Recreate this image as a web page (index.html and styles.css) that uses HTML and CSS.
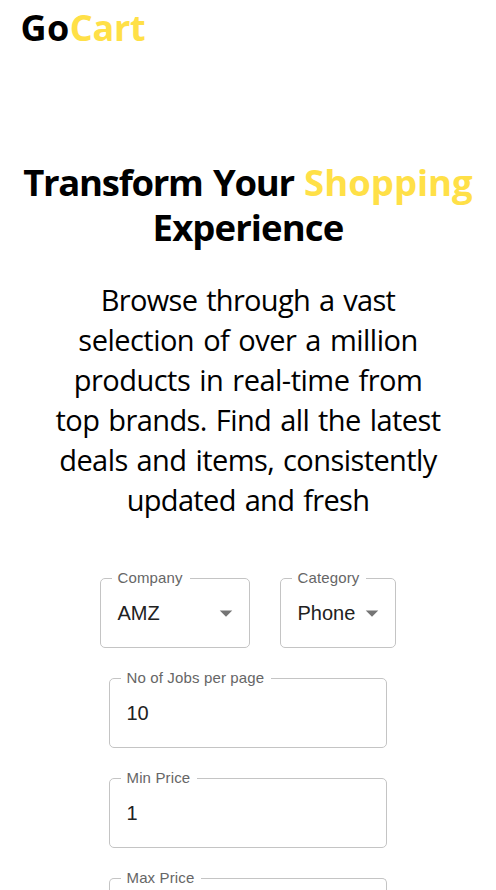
FILE: index.html
```html
<!DOCTYPE html>
<html lang="en">
<head>
<meta charset="utf-8">
<title>GoCart</title>
<link rel="stylesheet" href="styles.css">
</head>
<body>
<header class="logo"><span class="go">Go</span><span class="cart accent">Cart</span></header>
<main>
<h1><span class="line"><span class="lead">Transform Your </span><span class="accent">Shopping</span></span><span class="line second">Experience</span></h1>
<p class="intro"><span class="l1">Browse through a vast</span><span class="l2">selection of over a million</span><span class="l3">products in real-time from</span><span class="l4">top brands. Find all the latest</span><span class="l5">deals and items, consistently</span><span class="l6">updated and fresh</span></p>
<form class="filters">
<div class="row">
<fieldset class="field company"><legend>Company</legend><div class="value">AMZ<svg class="arrow" viewBox="0 0 24 24"><path d="M7 10l5 5 5-5z"/></svg></div></fieldset>
<fieldset class="field category"><legend>Category</legend><div class="value">Phone<svg class="arrow" viewBox="0 0 24 24"><path d="M7 10l5 5 5-5z"/></svg></div></fieldset>
</div>
<fieldset class="field wide"><legend>No of Jobs per page</legend><div class="value">10</div></fieldset>
<fieldset class="field wide"><legend>Min Price</legend><div class="value">1</div></fieldset>
<fieldset class="field wide last"><legend>Max Price</legend></fieldset>
</form>
</main>
</body>
</html>
```
FILE: styles.css
```css
* { box-sizing: border-box; }
html, body { margin: 0; height: 890px; overflow: hidden; }
body { background: #fff; color: #000; font-family: "Open Sans", "Noto Sans", sans-serif; }
.logo { height: 56px; padding: 3px 0 0 20.5px; font-size: 36px; line-height: 50px; font-weight: 700; white-space: nowrap; }
.go { letter-spacing: 0.4px; }
.cart { letter-spacing: -0.2px; }
.accent { color: #ffe047; }
h1 { margin: 104px 0 0; font-size: 36.5px; line-height: 45px; font-weight: 700; }
.line, .intro span { display: block; width: max-content; margin: 0 auto; white-space: nowrap; }
.lead { letter-spacing: -1.3px; word-spacing: 2.2px; }
.second { letter-spacing: -0.9px; }
.intro { margin: 30px 0 0; font-size: 29px; line-height: 40px; word-spacing: 2px; }
.l1 { letter-spacing: -0.69px; }
.l2 { letter-spacing: -0.52px; }
.l3 { letter-spacing: -0.51px; }
.l4 { letter-spacing: -0.59px; }
.l5 { letter-spacing: -0.58px; }
.l6 { letter-spacing: -0.66px; }
.filters { display: flex; flex-direction: column; align-items: center; gap: 22px; margin-top: 50px; }
.row { display: flex; gap: 30px; }
.field { height: 78px; margin: 0; padding: 0 16px 0 16.5px; border: 1px solid #c4c4c4; border-radius: 5px; font-family: "Liberation Sans", Arial, sans-serif; }
.field legend { height: 17px; margin-left: -6px; padding: 0 7px 0 6px; font-size: 15px; line-height: 16px; letter-spacing: 0.14px; color: #666; white-space: nowrap; }
.company { width: 150px; }
.category { width: 116px; }
.wide { width: 278px; }
.last { height: 20px; border-bottom: 0; border-radius: 5px 5px 0 0; }
.value { display: flex; align-items: center; justify-content: space-between; height: 52px; font-size: 20px; color: #212121; }
.arrow { width: 30px; height: 30px; margin-right: -8px; fill: #757575; flex: none; }
```
